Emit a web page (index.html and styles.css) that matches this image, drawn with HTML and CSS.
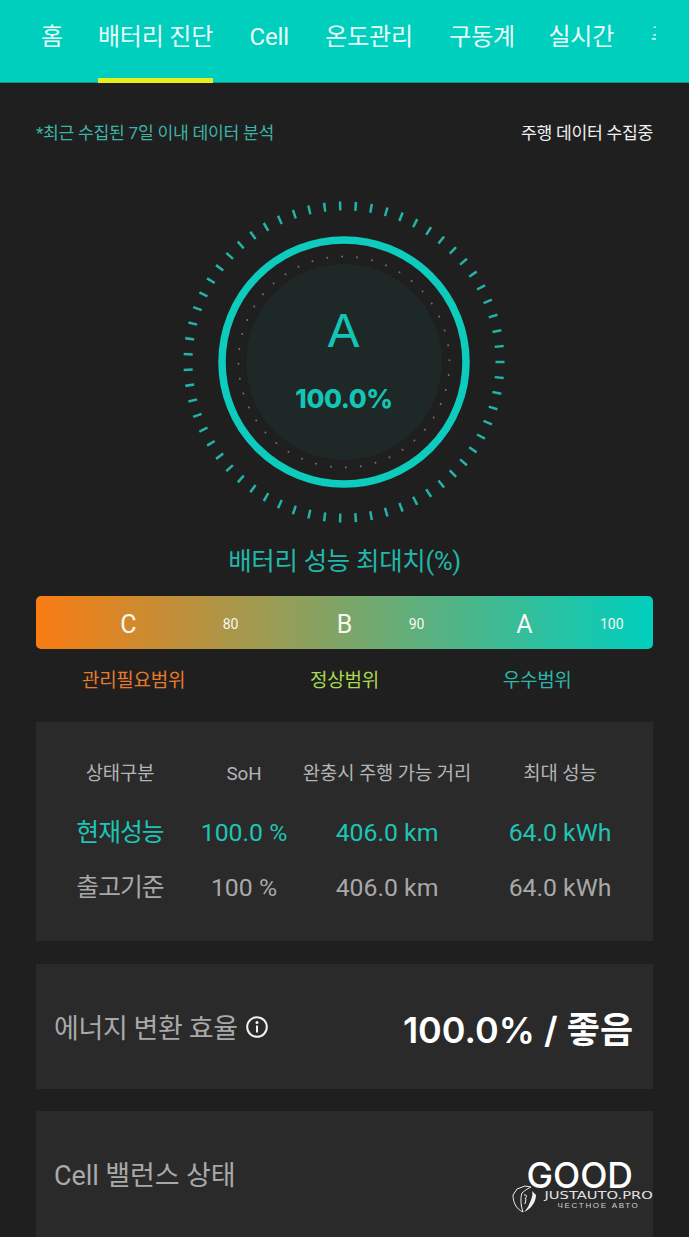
FILE: index.html
```html
<!DOCTYPE html>
<html lang="ko">
<head>
<meta charset="utf-8">
<title>배터리 진단</title>
<link rel="stylesheet" href="styles.css">
</head>
<body>
<div class="page">
  <nav class="tabs">
    <span class="tab home">홈</span>
    <span class="tab active">배터리 진단</span>
    <span class="tab">Cell</span>
    <span class="tab">온도관리</span>
    <span class="tab">구동계</span>
    <span class="tab live">실시간</span>
    <span class="tab clipped">주행</span>
  </nav>
  <main class="content">
    <div class="status">
      <span class="status-note">*최근 수집된 7일 이내 데이터 분석</span>
      <span class="status-live">주행 데이터 수집중</span>
    </div>
    <div class="gauge">
      <svg class="gauge-art" viewBox="0 0 330 330" width="330" height="330" aria-hidden="true">
        <circle class="ticks" cx="165" cy="165" r="156" pathLength="63" />
        <circle class="disc" cx="165" cy="165" r="98" />
        <circle class="dots" cx="165" cy="165" r="105.500" pathLength="44" transform="rotate(-1 165 165)" />
        <circle class="ring" cx="165" cy="165" r="122" />
      </svg>
      <div class="gauge-text">
        <span class="grade">A</span>
        <span class="score">100.0%</span>
      </div>
    </div>
    <h1 class="title">배터리 성능 최대치(%)</h1>
    <div class="bar">
      <span class="b-grade b-c">C</span>
      <span class="b-num b-80">80</span>
      <span class="b-grade b-b">B</span>
      <span class="b-num b-90">90</span>
      <span class="b-grade b-a">A</span>
      <span class="b-num b-100">100</span>
    </div>
    <div class="ranges">
      <span class="range r-c">관리필요범위</span>
      <span class="range r-b">정상범위</span>
      <span class="range r-a">우수범위</span>
    </div>
    <section class="card table">
      <span class="th">상태구분</span>
      <span class="th">SoH</span>
      <span class="th">완충시 주행 가능 거리</span>
      <span class="th">최대 성능</span>
      <span class="td now name">현재성능</span>
      <span class="td now">100.0 %</span>
      <span class="td now">406.0 km</span>
      <span class="td now">64.0 kWh</span>
      <span class="td name">출고기준</span>
      <span class="td">100 %</span>
      <span class="td">406.0 km</span>
      <span class="td">64.0 kWh</span>
    </section>
    <section class="card metric">
      <span class="metric-label">에너지 변환 효율
        <svg class="info" viewBox="0 0 24 24" width="24" height="24" aria-hidden="true">
          <circle cx="12" cy="12" r="9.800" />
          <path d="M12 10.500V17.500" />
          <circle class="info-dot" cx="12" cy="7.400" r="1.500" />
        </svg>
      </span>
      <span class="metric-value">100.0% / 좋음</span>
    </section>
    <section class="card metric cell">
      <span class="metric-label cell-label">Cell 밸런스 상태</span>
      <span class="metric-value good">GOOD</span>
    </section>
  </main>
  <div class="mark">
    <svg class="mark-logo" viewBox="0 0 30 30" width="30" height="30" aria-hidden="true">
      <path class="mark-line" d="M14 2 L6 5 L2 11 C2 18 5 25 12 28 C10 22 9 15 11 9 C14 6 18 4 20 3 Z" />
      <path class="mark-fill" d="M21 7 L25 11 C25 18 20 25 13 28 C18 23 18 20 20 16 C21 13 22 10 21 7 Z" />
      <path class="mark-line" d="M13 11 C16 10 16 13 14 15 M15 15 L14 20" />
    </svg>
    <div class="mark-text">
      <span class="mark-name">JUSTAUTO.PRO</span>
      <span class="mark-sub">ЧЕСТНОЕ АВТО</span>
    </div>
  </div>
</div>
</body>
</html>
```

FILE: styles.css
```css
* { box-sizing: border-box; }
html, body { margin: 0; padding: 0; height: 1237px; overflow: hidden; background: #1f1f1f; }
body { font-family: Roboto, "Noto Sans CJK KR", sans-serif; color: #fff; }
.page { position: relative; width: 689px; height: 1237px; overflow: hidden; }

.tabs {
  display: flex; gap: 36.500px; height: 83px; padding: 0 0 0 41px;
  background: #00cfbe; box-shadow: inset 0 -1px #1c8f85; overflow: hidden;
}
.tab {
  flex: none; height: 83px; padding-top: 20px; font-size: 24px; line-height: 34px;
  letter-spacing: -0.200px; color: #e9fbf8; white-space: nowrap;
}
.tab.home { margin-right: -1.500px; }
.tab.live { margin-left: -3px; }
.tab.active { border-bottom: 5px solid #e6ee1c; }
.tab.clipped { width: 5px; overflow: hidden; opacity: 0.8; }

.content { padding: 0 36px; }
.status { display: flex; justify-content: space-between; align-items: center; height: 28px; margin-top: 36px; font-size: 17.200px; line-height: 28px; letter-spacing: -0.300px; }
.status-note { color: #3cb4a8; }
.status-live { color: #f0f0f0; }

.gauge { position: relative; width: 330px; height: 330px; margin: 50px auto 0; left: -0.500px; }
.gauge-art { display: block; }
.ticks { fill: none; stroke: #22b5a6; stroke-width: 9; stroke-dasharray: 0.160 0.840; stroke-dashoffset: 0.080; }
.disc { fill: #1e2827; }
.dots { fill: none; stroke: #75706c; stroke-width: 2; stroke-linecap: round; stroke-dasharray: 0 1; }
.ring { fill: none; stroke: #0dccbd; stroke-width: 7.500; }
.gauge-text { position: absolute; inset: 0; display: flex; flex-direction: column; align-items: center; font-family: Inter, sans-serif; color: #14c4b4; }
.grade { margin-top: 104px; font-size: 45px; line-height: 60px; font-weight: 400; transform: scaleX(1.1); }
.score { margin-top: 18px; font-size: 26px; line-height: 40px; font-weight: 800; letter-spacing: -0.400px; }

.title { margin: 17px 0 0; text-align: center; font-size: 25.500px; line-height: 34px; font-weight: 400; color: #1fb8aa; letter-spacing: -0.300px; }

.bar {
  display: flex; align-items: center; height: 53px; margin-top: 18px; padding: 3px 0 0 84px;
  border-radius: 5px; background: linear-gradient(90deg, #f97c12 0%, #00cfbe 100%); color: #f7f7f2;
}
.b-grade { font-size: 25px; width: 17px; text-align: center; }
.b-num { font-size: 14px; width: 17px; text-align: center; }
.b-80 { margin-left: 85px; }
.b-b { margin-left: 97px; }
.b-90 { margin-left: 55px; }
.b-a { margin-left: 91px; }
.b-100 { margin-left: 67px; width: 23px; }

.ranges { display: flex; height: 32px; margin-top: 16px; padding-left: 46px; font-size: 19px; line-height: 32px; letter-spacing: -0.300px; }
.r-c { color: #e87a2a; }
.r-b { margin-left: 125px; color: #a9d94e; }
.r-a { margin-left: 124px; color: #2cb7a8; }

.card { background: #2a2a2a; }
.table {
  display: grid; grid-template-columns: 168px 80px 206px 140px; grid-template-rows: 53px 65px 45px;
  align-items: center; justify-items: center;
  height: 219px; margin-top: 25px; padding: 25px 23px 0 0;
}
.th { font-size: 18.800px; line-height: 30px; color: #b4b4b4; letter-spacing: -0.100px; white-space: nowrap; }
.td { font-size: 24.800px; line-height: 30px; color: #a8a8a8; white-space: nowrap; }
.td.name { letter-spacing: -1px; }
.td.now { color: #1ec4b4; }

.metric { display: flex; justify-content: space-between; align-items: center; height: 125px; margin-top: 23px; padding: 0 20px 0 18px; }
.metric-label { display: flex; align-items: center; gap: 7px; font-size: 27px; letter-spacing: -0.400px; color: #a9a9a9; }
.cell-label { letter-spacing: -0.100px; }
.info { fill: none; stroke: #f2f2f2; stroke-width: 2; }
.info-dot { fill: #f2f2f2; stroke: none; }
.metric-value { font-family: Inter, "Noto Sans CJK KR", sans-serif; font-size: 36px; font-weight: 600; letter-spacing: 0; color: #fff; }
.cell { margin-top: 22px; height: 130px; align-items: flex-start; padding-top: 43px; }
.good { font-size: 35.500px; font-weight: 500; line-height: 48px; margin-top: -2px; letter-spacing: 0; }

.mark { position: absolute; left: 511px; top: 1184px; display: flex; gap: 3px; }
.mark-logo { display: block; }
.mark-line { fill: none; stroke: #f0f0f0; stroke-width: 1; }
.mark-fill { fill: #f0f0f0; }
.mark-text { display: flex; flex-direction: column; align-items: center; width: 109px; padding-top: 4px; }
.mark-name { font-family: "DejaVu Sans", sans-serif; font-size: 10.500px; line-height: 14px; white-space: nowrap; color: #e2e2e2; transform: scaleX(1.4); }
.mark-sub { font-family: "Liberation Sans", sans-serif; font-size: 8px; line-height: 9px; letter-spacing: 1.700px; color: #cfcfcf; margin-top: -1.500px; white-space: nowrap; }
```
